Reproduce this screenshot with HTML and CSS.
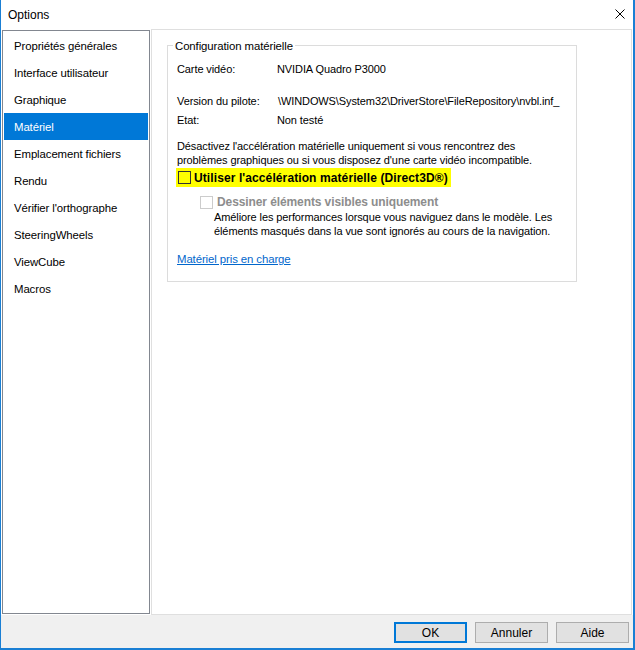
FILE: index.html
```html
<!DOCTYPE html>
<html lang="fr">
<head>
<meta charset="utf-8">
<title>Options</title>
<link rel="stylesheet" href="styles.css">
</head>
<body>
<div class="window">
  <div class="titlebar">
    <span class="title">Options</span>
    <svg class="close" width="10" height="10" viewBox="0 0 10 10"><path d="M0.5 0.5 L9.5 9.5 M9.5 0.5 L0.5 9.5" stroke="#000" stroke-width="1" fill="none"/></svg>
  </div>
  <div class="content">
    <ul class="nav">
      <li class="nav-item">Propriétés générales</li>
      <li class="nav-item">Interface utilisateur</li>
      <li class="nav-item">Graphique</li>
      <li class="nav-item selected">Matériel</li>
      <li class="nav-item">Emplacement fichiers</li>
      <li class="nav-item">Rendu</li>
      <li class="nav-item">Vérifier l'orthographe</li>
      <li class="nav-item">SteeringWheels</li>
      <li class="nav-item">ViewCube</li>
      <li class="nav-item">Macros</li>
    </ul>
    <div class="panel">
      <div class="group">
        <span class="legend">Configuration matérielle</span>
        <div class="row row-card"><span class="label">Carte vidéo:</span><span class="value">NVIDIA Quadro P3000</span></div>
        <div class="row row-driver"><span class="label">Version du pilote:</span><span class="value">\WINDOWS\System32\DriverStore\FileRepository\nvbl.inf_</span></div>
        <div class="row row-state"><span class="label">Etat:</span><span class="value">Non testé</span></div>
        <p class="note">Désactivez l'accélération matérielle uniquement si vous rencontrez des<br>problèmes graphiques ou si vous disposez d'une carte vidéo incompatible.</p>
        <div class="check-main"><span class="highlight"><span class="box"></span><span class="check-label">Utiliser l'accélération matérielle (Direct3D®)</span></span></div>
        <div class="check-sub"><span class="box disabled"></span><span class="check-label disabled-text">Dessiner éléments visibles uniquement</span></div>
        <p class="sub-desc">Améliore les performances lorsque vous naviguez dans le modèle. Les<br>éléments masqués dans la vue sont ignorés au cours de la navigation.</p>
        <a class="link" href="#">Matériel pris en charge</a>
      </div>
    </div>
  </div>
  <div class="footer">
    <button class="btn default">OK</button>
    <button class="btn">Annuler</button>
    <button class="btn">Aide</button>
  </div>
</div>
</body>
</html>
```
FILE: styles.css
```css
* { box-sizing: border-box; }
html, body { margin: 0; padding: 0; }
body {
  font-family: "Liberation Sans", Arial, sans-serif;
  font-size: 11.4px;
  letter-spacing: -0.1px;
  color: #000;
  background: #fff;
}
.window {
  width: 635px;
  height: 650px;
  border-left: 1px solid #1a7fd4;
  border-right: 2px solid #1a7fd4;
  border-bottom: 2px solid #1a7fd4;
  background: #fff;
  display: flex;
  flex-direction: column;
}
.titlebar {
  height: 29px;
  display: flex;
  align-items: center;
  justify-content: space-between;
  padding-left: 7px;
  padding-right: 8px;
}
.title { font-size: 12px; letter-spacing: 0; line-height: 29px; padding-top: 1px; }
.close { display: block; margin-top: -1px; }
.content {
  height: 586px;
  display: flex;
  align-items: flex-start;
}
.nav {
  list-style: none;
  margin: 1px 0 0 1px;
  padding: 1px;
  width: 148px;
  height: 584px;
  border: 1px solid #828790;
}
.nav-item {
  height: 27px;
  line-height: 27px;
  padding: 1px 0 0 10px;
  white-space: nowrap;
}
.nav-item.selected {
  background: #0078d7;
  color: #fff;
}
.panel {
  margin-left: 1px;
  width: 481px;
  height: 586px;
  border: 1px solid #dfdfdf;
  padding: 15px 0 0 15px;
}
.group {
  position: relative;
  width: 410px;
  height: 237px;
  border: 1px solid #dcdcdc;
  padding: 15px 0 0 9px;
  font-size: 11px;
}
.legend {
  position: absolute;
  left: 5px;
  top: -8px;
  padding: 0 2px;
  background: #fff;
  line-height: 16px;
  font-size: 11.4px;
}
.row {
  display: flex;
  line-height: 16px;
  white-space: nowrap;
}
.label { width: 100px; flex: none; }
.row-driver { margin-top: 16px; }
.row-driver .value { margin-left: 1px; }
.row-state { margin-top: 3px; }
.note {
  margin: 11px 0 0 0;
  line-height: 14px;
  white-space: nowrap;
}
.check-main {
  margin-top: 1px;
  height: 19px;
  margin-left: -1px;
}
.highlight {
  display: inline-flex;
  align-items: center;
  background: #ffff00;
  height: 19px;
  padding: 0 3px 0 2px;
}
.box {
  width: 13px;
  height: 13px;
  border: 1px solid #333;
  background: transparent;
  flex: none;
}
.check-label {
  font-weight: bold;
  font-size: 12px;
  letter-spacing: 0.1px;
  margin-left: 3px;
  line-height: 16px;
  white-space: nowrap;
}
.check-sub {
  margin-top: 7px;
  margin-left: 23px;
  display: flex;
  align-items: center;
  height: 16px;
}
.box.disabled { border-color: #cccccc; background: #fff; }
.disabled-text { color: #8d8d8d; margin-left: 4px; letter-spacing: -0.1px; }
.sub-desc {
  margin: 0 0 0 37px;
  line-height: 14px;
  white-space: nowrap;
}
.link {
  display: inline-block;
  margin-top: 13px;
  line-height: 16px;
  color: #0066cc;
  text-decoration: underline;
  font-size: 11.4px;
}
.footer {
  flex: 1;
  background: #f0f0f0;
  display: flex;
  justify-content: flex-end;
  align-items: flex-start;
  gap: 8px;
  padding: 7px 4px 0 0;
}
.btn {
  width: 73px;
  height: 21px;
  border: 1px solid #adadad;
  background: #e1e1e1;
  font-family: inherit;
  font-size: 12px;
  color: #000;
  padding: 0;
  margin: 0;
}
.btn.default { border: 2px solid #0078d7; }
```
